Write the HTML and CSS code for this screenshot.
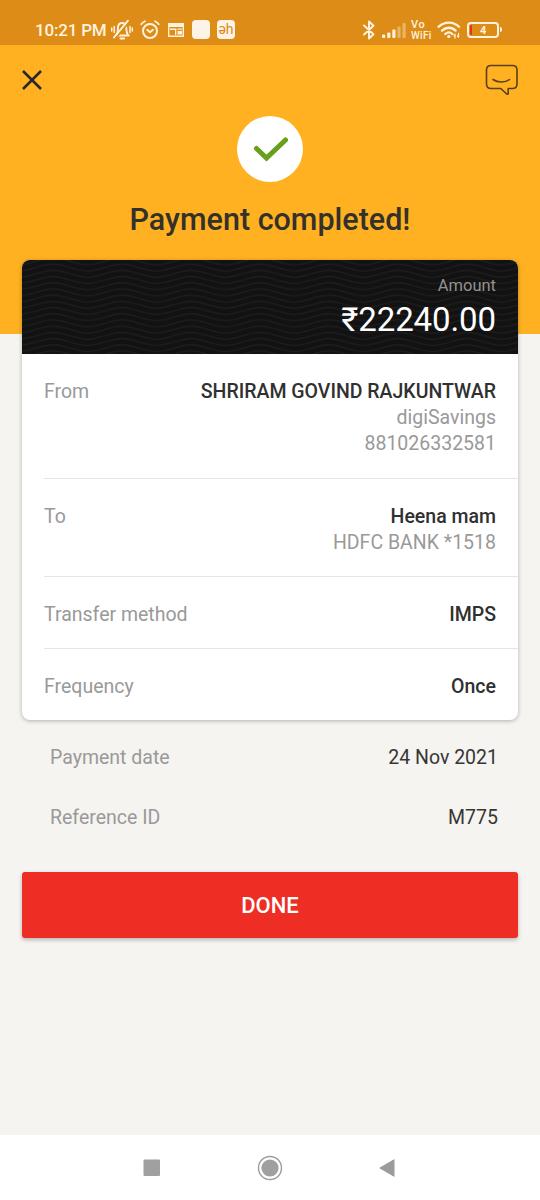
FILE: index.html
```html
<!DOCTYPE html>
<html lang="en">
<head>
<meta charset="utf-8">
<title>Payment completed</title>
<link rel="stylesheet" href="styles.css">
</head>
<body>
<div class="screen">
  <header class="status">
    <span class="clock">10:21 PM</span>
    <svg class="bell" width="24" height="22" viewBox="0 0 24 22" fill="none" stroke="#fff3df" stroke-width="1.9" stroke-linecap="round">
      <path d="M5.500 16.500h13.300M7 15c1-1.600.8-4 .9-6C8.100 5.800 9.500 4 12 4s4 1.800 4.300 5c.2 2.600 0 4.500 1.500 6.500M10.500 19.500h3.600"/>
      <path d="M4.200 7.500v6M1.700 9v3M20 7.500v6M22.300 9v3" stroke-width="1.500"/>
      <path d="M5.600 19.300L19.200 2.800" stroke="#dc8c17" stroke-width="2"/>
      <path d="M4 18.500L18 1.700"/>
    </svg>
    <svg class="alarm" width="20" height="20" viewBox="0 0 20 20" fill="none" stroke="#fff3df" stroke-width="2" stroke-linecap="round" stroke-linejoin="round">
      <circle cx="10" cy="11" r="7"/>
      <path d="M7.300 9.800L10 12.200l2.900-2.400"/>
      <path d="M1.200 4.300C2.200 2.800 3.400 1.900 5 1.200M18.800 4.300c-1-1.500-2.200-2.400-3.800-3.100" stroke-width="1.700"/>
    </svg>
    <svg class="news" width="16" height="14" viewBox="0 0 16 14">
      <path d="M.7.7h14.600v12.600H.7z" fill="none" stroke="#fff3df" stroke-width="1.400"/>
      <path d="M.5.5h15V4H.5z" fill="#fff3df"/>
      <path d="M2 5.500h6.500V7H2zM9.500 5.500H14v1.200H9.500zM9.500 8H14v3.500H9.500zM7 6.500h1.300v5.500H7z" fill="#fff3df"/>
    </svg>
    <span class="app"></span>
    <span class="app app-dh">əh</span>
    <span class="spacer"></span>
    <svg class="bt" width="14" height="20" viewBox="0 0 14 20" fill="none" stroke="#fff3df" stroke-width="1.900" stroke-linejoin="round" stroke-linecap="round">
      <path d="M2 5.500l9.500 8.800L7 18.500v-17l4.500 4.200L2 14.500"/>
    </svg>
    <svg class="signal" width="24" height="16" viewBox="0 0 24 16" fill="#fff3df">
      <rect x="0" y="12.500" width="3.200" height="3.500" rx="1"/>
      <rect x="5.200" y="10.500" width="3.200" height="5.500" rx="1"/>
      <rect x="10.300" y="7.500" width="3.200" height="8.500" rx="1"/>
      <rect x="15.400" y="4.500" width="3.200" height="11.500" rx="1" opacity=".4"/>
      <rect x="20.500" y="1" width="3.200" height="15" rx="1" opacity=".4"/>
    </svg>
    <span class="vowifi"><span class="vo">Vo</span><span class="wf">WiFi</span></span>
    <svg class="wifi" width="24" height="18" viewBox="0 0 24 18" fill="none" stroke="#fff3df" stroke-width="2.300" stroke-linecap="round">
      <path d="M1.500 5.800C7.500.2 16.500.2 22 5.800M5 9.600c4-3.800 9.800-3.800 13.600 0M8.300 13c2.200-2 4.900-2 7 0"/>
      <circle cx="11.800" cy="15.500" r="1.600" fill="#fff3df" stroke="none"/>
      <path d="M18 17v-3.500M21.500 12.500V16M17 14.500l1-1.200M20.500 15l1 1.200" stroke-width="1.300"/>
    </svg>
    <span class="battery"><span class="charge"></span>4</span>
    <span class="battery-tip"></span>
  </header>

  <section class="hero">
    <div class="actions">
      <svg width="20" height="20" viewBox="0 0 20 20" fill="none" stroke="#292722" stroke-width="2.500" stroke-linecap="butt"><path d="M1 1l18 18M19 1L1 19"/></svg>
      <svg class="chat" width="34" height="32" viewBox="0 0 34 32" fill="none" stroke="#57401a" stroke-width="1.600" stroke-linecap="round" stroke-linejoin="round">
        <path d="M6 1.500h21.500q4.500 0 4.500 4.500v14q0 4.500-4.500 4.500h-4.300v5.200q-.4 1-1.500.3L15.800 24.500H6Q1.500 24.500 1.500 20V6Q1.500 1.500 6 1.500z"/>
        <path d="M8 15.500c4.500 3.300 12.500 3.300 16.500 0"/>
      </svg>
    </div>
    <div class="tick">
      <svg width="36" height="26" viewBox="0 0 36 26" fill="none" stroke="#689f1d" stroke-width="5" stroke-linecap="round" stroke-linejoin="miter"><path d="M4.500 12.500l10 9.500L33.500 4"/></svg>
    </div>
    <h1 class="title">Payment completed!</h1>
  </section>

  <main class="content">
    <section class="card">
      <div class="amount">
        <svg class="waves" width="496" height="94">
          <defs>
            <pattern id="wave" x="31" y="1" width="69" height="6.200" patternUnits="userSpaceOnUse">
              <g fill="none" stroke="#1e1e1e" stroke-width="1.300">
                <path d="M0-9.300C12-9.300 22-2.300 34.500-2.300S57-9.300 69-9.300"/>
                <path d="M0-3.100C12-3.100 22 3.900 34.500 3.900S57-3.100 69-3.100"/>
                <path d="M0 3.100C12 3.100 22 10.100 34.500 10.100S57 3.100 69 3.100"/>
              </g>
            </pattern>
          </defs>
          <rect width="496" height="94" fill="url(#wave)"/>
        </svg>
        <span class="amount-label">Amount</span>
        <span class="amount-value">₹22240.00</span>
      </div>
      <div class="row from">
        <span class="label">From</span>
        <div class="value"><strong>SHRIRAM GOVIND RAJKUNTWAR</strong><span>digiSavings</span><span>881026332581</span></div>
      </div>
      <div class="row to">
        <span class="label">To</span>
        <div class="value"><strong>Heena mam</strong><span>HDFC BANK *1518</span></div>
      </div>
      <div class="row"><span class="label">Transfer method</span><div class="value"><strong>IMPS</strong></div></div>
      <div class="row"><span class="label">Frequency</span><div class="value"><strong>Once</strong></div></div>
    </section>
    <dl class="meta">
      <dt>Payment date</dt><dd>24 Nov 2021</dd>
      <dt>Reference ID</dt><dd>M775</dd>
    </dl>
    <button class="done">DONE</button>
  </main>

  <nav class="nav">
    <svg width="18" height="18"><rect x=".5" y=".5" width="16.500" height="16.500" rx="1" fill="#a0a0a0"/></svg>
    <svg width="26" height="26"><circle cx="13" cy="13" r="11.500" fill="none" stroke="#9b9b9b" stroke-width="1.400"/><circle cx="13" cy="13" r="8.600" fill="#9f9f9f"/></svg>
    <svg width="18" height="20"><path d="M1 10L16.500 1v18z" fill="#9b9b9b"/></svg>
  </nav>
</div>
</body>
</html>
```

FILE: styles.css
```css
* { box-sizing: border-box; }
body { margin: 0; font-family: Roboto, "Liberation Sans", sans-serif; background: #f6f4f0; }
svg { display: block; flex: none; }
.screen { width: 540px; height: 1200px; display: flex; flex-direction: column; overflow: hidden; }

.status { flex: none; height: 45px; padding: 14px 38px 0 35px; background: #dc8c17; color: #fff3df; display: flex; align-items: center; }
.clock { width: 75px; font-size: 17px; font-weight: 500; letter-spacing: -.2px; line-height: 20px; white-space: nowrap; }
.alarm { margin-left: 6px; }
.news { margin-left: 8px; }
.app { flex: none; width: 18px; height: 19px; margin-left: 8px; border-radius: 4px; background: #fff3e8; }
.app-dh { margin-left: 7px; color: #dc8c17; font-size: 14px; line-height: 18px; text-align: center; }
.spacer { flex: 1; }
.signal { margin-left: 6px; }
.vowifi { width: 22px; margin-left: 5px; display: flex; flex-direction: column; font-weight: 500; line-height: 11px; }
.vo { font-size: 11px; letter-spacing: .6px; }
.wf { font-size: 10px; letter-spacing: .3px; }
.wifi { margin-left: 4px; }
.battery { width: 32px; height: 16px; margin-left: 6px; border: 2px solid #fff3df; border-radius: 4px; font-size: 11px; font-weight: 700; line-height: 13px; display: flex; padding-left: 1px; }
.charge { width: 2px; height: 10px; margin: 1px 8px 0 0; background: #df371b; border-radius: 1px; }
.battery-tip { width: 2px; height: 5px; margin-left: 1px; background: #fff3df; border-radius: 0 2px 2px 0; }

.hero { flex: none; height: 289px; background: #ffb122; display: flex; flex-direction: column; align-items: center; }
.actions { width: 100%; height: 71px; padding: 19px 21px 0 22px; display: flex; justify-content: space-between; }
.actions > svg:first-child { margin-top: 6px; }
.tick { flex: none; width: 66px; height: 66px; border-radius: 50%; background: #fff; display: flex; align-items: center; justify-content: center; }
.title { margin: 20px 0 0; font-size: 30.5px; font-weight: 500; line-height: 36px; color: #34312b; }

.content { flex: 1; padding: 0 22px; margin-top: -74px; display: flex; flex-direction: column; }
.card { flex: none; height: 460px; background: #fff; border-radius: 8px; overflow: hidden; box-shadow: 0 1px 4px rgba(0, 0, 0, .28); }
.amount { height: 94px; padding: 17px 22px 0; background: #121212; color: #fff; display: grid; justify-items: end; align-content: start; }
.waves { grid-area: 1 / 1 / 3 / 2; margin: -17px -22px -22px; }
.amount-label { grid-area: 1 / 1; font-size: 16.5px; line-height: 18px; color: #929292; }
.amount-value { grid-area: 2 / 1; font-size: 33px; line-height: 38px; padding-top: 6px; letter-spacing: -.1px; }
.row { margin-left: 22px; padding: 24px 22px 0 0; height: 72px; display: flex; justify-content: space-between; border-bottom: 1px solid #e5e5e5; font-size: 19.5px; line-height: 27px; }
.row:last-child { border-bottom: 0; }
.from { height: 125px; }
.to { height: 98px; }
.label { color: #999; }
.value { display: flex; flex-direction: column; align-items: flex-end; color: #999; }
.value strong { font-weight: 500; color: #303030; }
.value span { line-height: 26px; }
.meta { margin: 0; padding: 24px 20px 0 28px; display: grid; grid-template-columns: 1fr auto; row-gap: 33px; font-size: 19.5px; line-height: 27px; }
.meta dt { color: #999; }
.meta dd { margin: 0; color: #363636; text-align: right; }
.done { flex: none; height: 66px; margin-top: 41px; border: 0; border-radius: 3px; background: #ee2d24; color: #fff; font: 500 22px/66px Roboto, sans-serif; box-shadow: 0 2px 4px rgba(0, 0, 0, .25); }

.nav { flex: none; height: 65px; padding: 0 144px 0 143px; background: #fff; display: flex; align-items: center; justify-content: space-between; }
```
